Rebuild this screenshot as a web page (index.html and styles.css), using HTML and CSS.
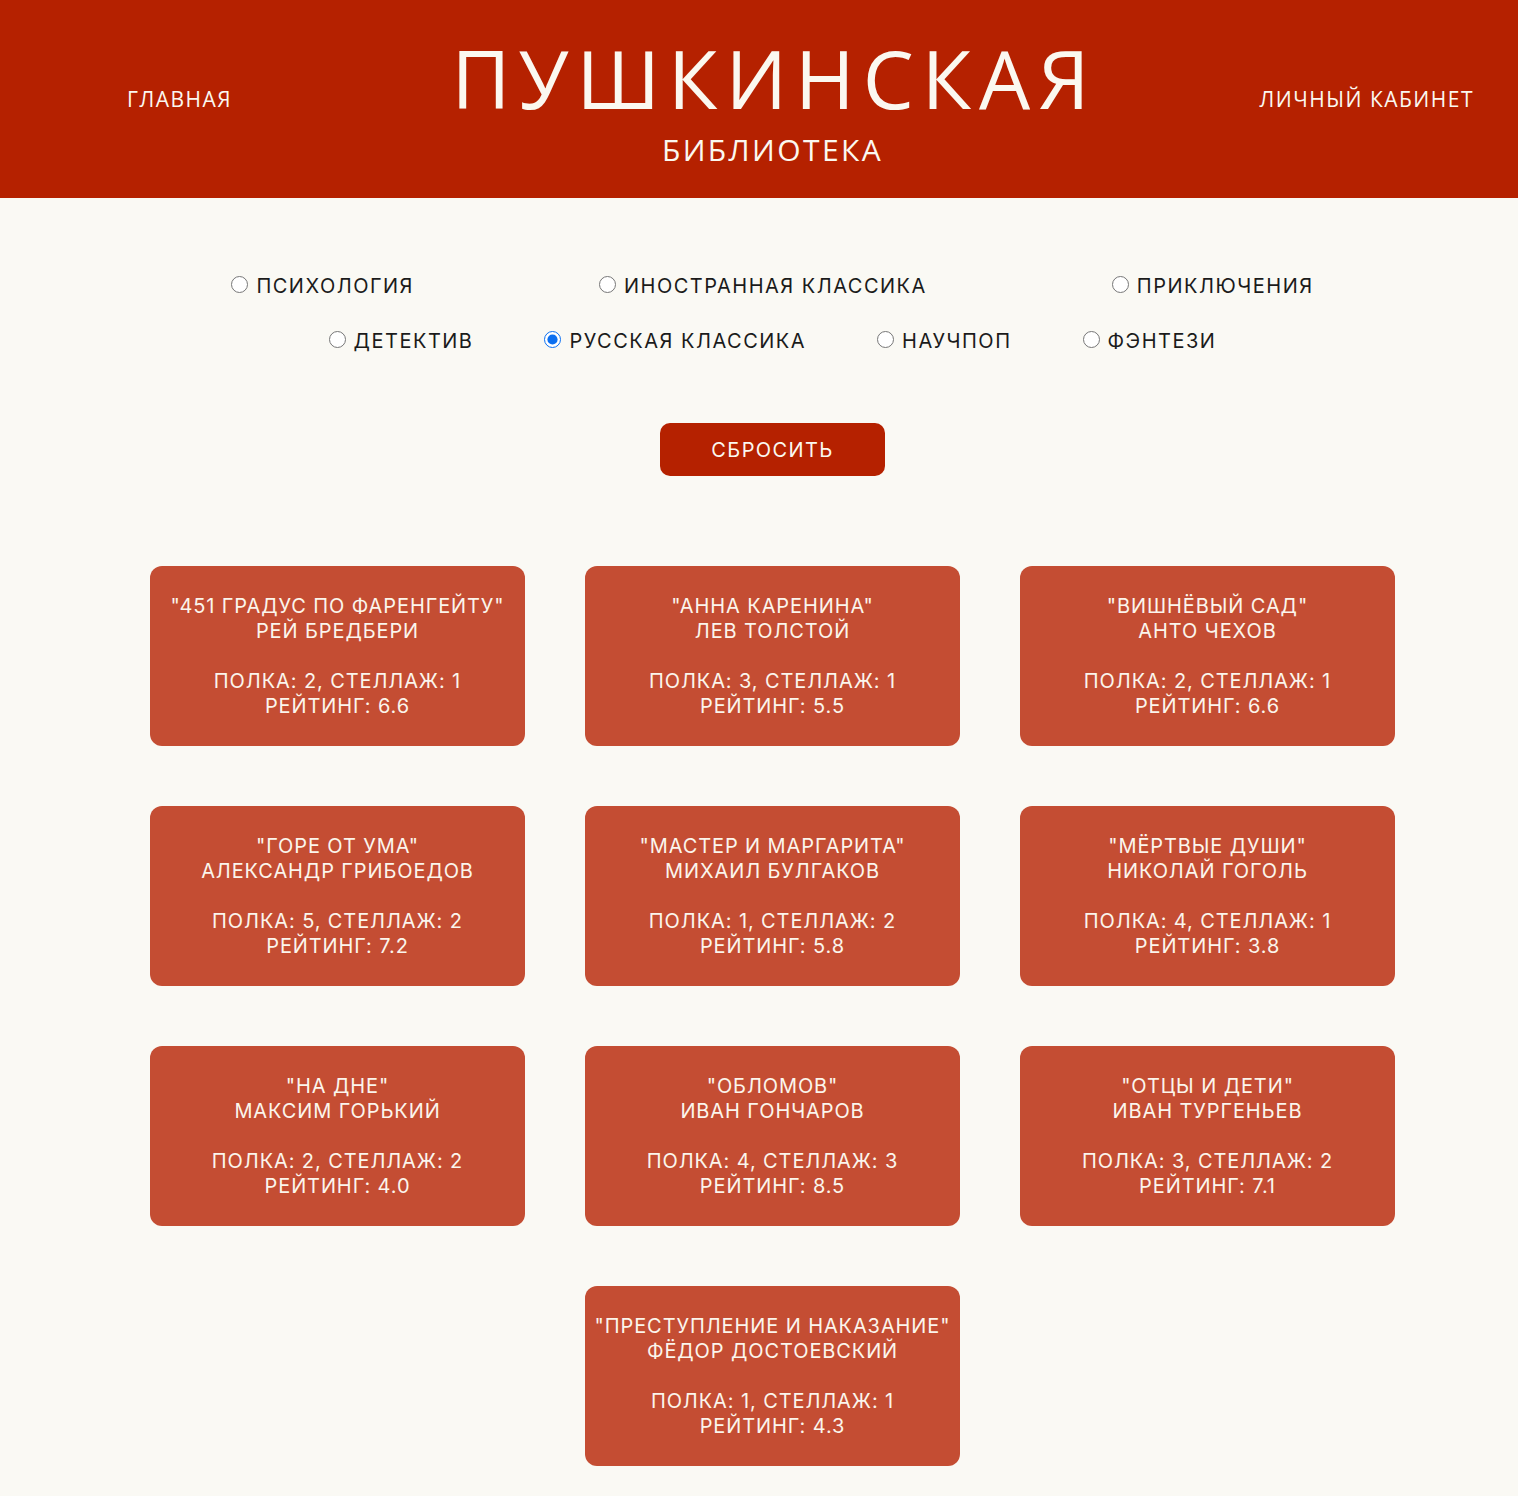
FILE: index.html
```html
<!DOCTYPE html>
<html lang="ru">
<head>
<meta charset="utf-8">
<title>Пушкинская библиотека</title>
<link rel="stylesheet" href="styles.css">
</head>
<body>
<header class="header">
  <a class="nav-link nav-left" href="#">ГЛАВНАЯ</a>
  <div class="brand">
    <h1 class="brand-title">ПУШКИНСКАЯ</h1>
    <div class="brand-sub">БИБЛИОТЕКА</div>
  </div>
  <a class="nav-link nav-right" href="#">ЛИЧНЫЙ КАБИНЕТ</a>
</header>
<main class="main">
  <form class="filters">
    <div class="filter-row row-wide">
      <label class="opt"><input type="radio" name="genre"> ПСИХОЛОГИЯ</label>
      <label class="opt"><input type="radio" name="genre"> ИНОСТРАННАЯ КЛАССИКА</label>
      <label class="opt"><input type="radio" name="genre"> ПРИКЛЮЧЕНИЯ</label>
    </div>
    <div class="filter-row row-tight">
      <label class="opt"><input type="radio" name="genre"> ДЕТЕКТИВ</label>
      <label class="opt"><input type="radio" name="genre" checked> РУССКАЯ КЛАССИКА</label>
      <label class="opt"><input type="radio" name="genre"> НАУЧПОП</label>
      <label class="opt"><input type="radio" name="genre"> ФЭНТЕЗИ</label>
    </div>
    <button type="reset" class="reset">СБРОСИТЬ</button>
  </form>
  <section class="books">
    <div class="card"><p>"451 ГРАДУС ПО ФАРЕНГЕЙТУ"<br>РЕЙ БРЕДБЕРИ</p><p>ПОЛКА: 2, СТЕЛЛАЖ: 1<br>РЕЙТИНГ: 6.6</p></div>
    <div class="card"><p>"АННА КАРЕНИНА"<br>ЛЕВ ТОЛСТОЙ</p><p>ПОЛКА: 3, СТЕЛЛАЖ: 1<br>РЕЙТИНГ: 5.5</p></div>
    <div class="card"><p>"ВИШНЁВЫЙ САД"<br>АНТО ЧЕХОВ</p><p>ПОЛКА: 2, СТЕЛЛАЖ: 1<br>РЕЙТИНГ: 6.6</p></div>
    <div class="card"><p>"ГОРЕ ОТ УМА"<br>АЛЕКСАНДР ГРИБОЕДОВ</p><p>ПОЛКА: 5, СТЕЛЛАЖ: 2<br>РЕЙТИНГ: 7.2</p></div>
    <div class="card"><p>"МАСТЕР И МАРГАРИТА"<br>МИХАИЛ БУЛГАКОВ</p><p>ПОЛКА: 1, СТЕЛЛАЖ: 2<br>РЕЙТИНГ: 5.8</p></div>
    <div class="card"><p>"МЁРТВЫЕ ДУШИ"<br>НИКОЛАЙ ГОГОЛЬ</p><p>ПОЛКА: 4, СТЕЛЛАЖ: 1<br>РЕЙТИНГ: 3.8</p></div>
    <div class="card"><p>"НА ДНЕ"<br>МАКСИМ ГОРЬКИЙ</p><p>ПОЛКА: 2, СТЕЛЛАЖ: 2<br>РЕЙТИНГ: 4.0</p></div>
    <div class="card"><p>"ОБЛОМОВ"<br>ИВАН ГОНЧАРОВ</p><p>ПОЛКА: 4, СТЕЛЛАЖ: 3<br>РЕЙТИНГ: 8.5</p></div>
    <div class="card"><p>"ОТЦЫ И ДЕТИ"<br>ИВАН ТУРГЕНЬЕВ</p><p>ПОЛКА: 3, СТЕЛЛАЖ: 2<br>РЕЙТИНГ: 7.1</p></div>
    <div class="card"><p>"ПРЕСТУПЛЕНИЕ И НАКАЗАНИЕ"<br>ФЁДОР ДОСТОЕВСКИЙ</p><p>ПОЛКА: 1, СТЕЛЛАЖ: 1<br>РЕЙТИНГ: 4.3</p></div>
  </section>
</main>
</body>
</html>
```

FILE: styles.css
```css
* { box-sizing: border-box; }

body {
  margin: 0;
  background: #faf9f4;
  font-family: "Inter", "DejaVu Sans", sans-serif;
  color: #1b1b1b;
}

.header {
  height: 198px;
  background: #b52100;
  color: #fbf8f0;
  display: grid;
  grid-template-columns: 1fr auto 1fr;
  align-items: start;
  padding-left: 27px;
  font-family: "Open Sans", sans-serif;
}

.nav-link {
  color: #fbf8f0;
  text-decoration: none;
  font-size: 21px;
  letter-spacing: 1.5px;
  margin-top: 85px;
  line-height: 28px;
}

.nav-left { justify-self: start; padding-left: 100px; }
.nav-right { justify-self: end; padding-right: 44px; }

.brand {
  text-align: center;
  padding-top: 38px;
}

.brand-title {
  margin: 0;
  font-weight: 400;
  font-size: 81px;
  line-height: 80px;
  letter-spacing: 8px;
  padding-left: 4px;
}

.brand-sub {
  font-size: 30px;
  line-height: 40px;
  margin-top: 12px;
  letter-spacing: 2.4px;
}

.main {
  padding-left: 27px;
  padding-top: 74px;
  padding-bottom: 30px;
}

.filters {
  display: flex;
  flex-direction: column;
  align-items: center;
}

.filter-row {
  display: flex;
  justify-content: center;
  height: 28px;
}

.row-wide { gap: 185px; }
.row-tight { gap: 71px; margin-top: 27px; }

.opt {
  display: flex;
  align-items: center;
  font-size: 20px;
  line-height: 28px;
  letter-spacing: 1.5px;
  white-space: nowrap;
}

.opt input {
  width: 17px;
  height: 17px;
  margin: 0 8px 4px 0;
  accent-color: #0b6ff0;
}

.reset {
  margin-top: 68px;
  width: 225px;
  height: 53px;
  border: 0;
  border-radius: 10px;
  background: #b52100;
  color: #fbf8f0;
  font-family: inherit;
  font-size: 20px;
  letter-spacing: 1.4px;
}

.books {
  margin: 90px auto 0;
  width: 1245px;
  display: flex;
  flex-wrap: wrap;
  justify-content: center;
  gap: 60px;
}

.card {
  width: 375px;
  height: 180px;
  border-radius: 12px;
  background: #c44d33;
  color: #fbf5ec;
  text-align: center;
  font-size: 20px;
  line-height: 25px;
  letter-spacing: 0.9px;
  padding-top: 28px;
}

.card p { margin: 0; }
.card p + p { margin-top: 25px; }
```
